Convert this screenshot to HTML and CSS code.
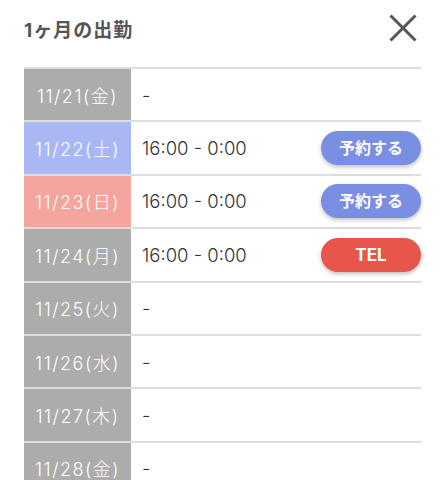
FILE: index.html
```html
<!DOCTYPE html>
<html lang="ja">
<head>
  <meta charset="UTF-8" />
  <title>1ヶ月の出勤</title>
  <link rel="stylesheet" href="styles.css">
</head>
<body>
  <div class="header">
    <h1 class="titulo">1ヶ月の出勤</h1>
    <button class="cerrar" aria-label="close">
      <svg width="28" height="28" viewBox="0 0 28 28">
        <path d="M1.5 1.5 L26.5 26.5 M26.5 1.5 L1.5 26.5" stroke="#555" stroke-width="3" fill="none"/>
      </svg>
    </button>
  </div>

  <table class="horario">
    <tr>
      <th>11/21(金)</th>
      <td>-</td>
      <td class="accion"></td>
    </tr>
    <tr>
      <th class="sabado">11/22(土)</th>
      <td class="hora">16:00 - 0:00</td>
      <td class="accion"><span class="btn reservar">予約する</span></td>
    </tr>
    <tr>
      <th class="domingo">11/23(日)</th>
      <td class="hora">16:00 - 0:00</td>
      <td class="accion"><span class="btn reservar">予約する</span></td>
    </tr>
    <tr>
      <th>11/24(月)</th>
      <td class="hora">16:00 - 0:00</td>
      <td class="accion"><span class="btn tel">TEL</span></td>
    </tr>
    <tr>
      <th>11/25(火)</th>
      <td>-</td>
      <td class="accion"></td>
    </tr>
    <tr>
      <th>11/26(水)</th>
      <td>-</td>
      <td class="accion"></td>
    </tr>
    <tr>
      <th>11/27(木)</th>
      <td>-</td>
      <td class="accion"></td>
    </tr>
    <tr>
      <th>11/28(金)</th>
      <td>-</td>
      <td class="accion"></td>
    </tr>
  </table>
</body>
</html>
```

FILE: styles.css
```css
body {
  margin: 0;
  font-family: Inter, "Noto Sans CJK JP", sans-serif;
  background: #fff;
  color: #333;
}

.header {
  display: flex;
  justify-content: space-between;
  align-items: center;
  padding: 0 28px 0 24px;
  height: 56px;
  margin-bottom: 11px;
}

.titulo {
  margin: 0;
  font-size: 19px;
  font-weight: bold;
  color: #555;
  letter-spacing: 1px;
}

.cerrar {
  border: none;
  background: none;
  padding: 0;
  width: 28px;
  height: 28px;
}

.horario {
  margin-left: 24px;
  width: 397px;
  border-collapse: collapse;
  border-top: 2px solid #ddd;
}

.horario tr {
  height: 53.4px;
  border-bottom: 2px solid #ddd;
}

.horario th {
  width: 107px;
  padding: 0;
  background: #acacac;
  color: #fff;
  font-size: 18px;
  font-weight: 300;
  letter-spacing: 1.5px;
  text-align: center;
}

.horario th.sabado {
  background: #a9b8f5;
}

.horario th.domingo {
  background: #f4a59e;
}

.horario td {
  padding: 0 0 0 11px;
  font-size: 18.5px;
  font-weight: 300;
  color: #333;
}

.horario td.accion {
  padding: 0;
  text-align: right;
  width: 100px;
}

.btn {
  display: inline-block;
  width: 100px;
  height: 34px;
  line-height: 34px;
  border-radius: 17px;
  color: #fff;
  text-align: center;
  font-size: 16px;
  font-weight: bold;
  box-shadow: 0 2px 4px rgba(0, 0, 0, 0.25);
  vertical-align: middle;
}

.reservar {
  background: #7a8ee3;
}

.tel {
  background: #e8554a;
  font-size: 17px;
}
```
